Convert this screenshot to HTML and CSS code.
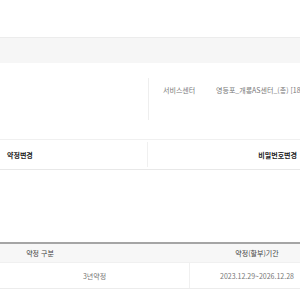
FILE: index.html
```html
<!DOCTYPE html>
<html lang="ko">
<head>
    <meta charset="UTF-8">
    <title>가입정보</title>
    <link rel="stylesheet" href="styles.css">
</head>
<body>
    <div class="top"></div>
    <div class="band"></div>

    <div class="info">
        <div class="info-left"></div>
        <div class="info-right">
            <span class="info-label">서비스센터</span>
            <span class="info-value">영등포_개롱AS센터_(총) [18</span>
        </div>
    </div>

    <div class="actions">
        <div class="action action-left">약정변경</div>
        <div class="action action-right">비밀번호변경</div>
    </div>

    <div class="contract">
        <div class="contract-head">
            <div class="head-cell">약정 구분</div>
            <div class="head-cell"></div>
            <div class="head-cell">약정(할부)기간</div>
        </div>
        <div class="contract-row">
            <div class="row-cell row-type">3년약정</div>
            <div class="row-cell">2023.12.29~2026.12.28</div>
        </div>
    </div>
</body>
</html>
```

FILE: styles.css
```css
body {
    margin: 0;
    background: #fff;
    font-family: "Noto Sans CJK KR", "Noto Sans", sans-serif;
    font-size: 7px;
    color: #666;
    width: 300px;
    overflow: hidden;
}

.top {
    height: 37px;
}

.band {
    height: 25px;
    background-color: #f6f6f6;
    border-top: 1px solid #ececec;
}

.info {
    display: flex;
    height: 76px;
}

.info-left {
    width: 148px;
    flex-shrink: 0;
}

.info-right {
    margin-top: 15px;
    height: 35px;
    flex: 1;
    min-width: 0;
    overflow: hidden;
    border-left: 1px solid #eeeeee;
    display: flex;
    align-items: flex-start;
    padding-top: 7px;
    white-space: nowrap;
}

.info-label {
    margin-left: 14px;
    width: 53px;
    flex-shrink: 0;
    color: #777;
}

.info-value {
    color: #777;
}

.actions {
    display: flex;
    height: 29px;
    border-top: 1px solid #f0f0f0;
    border-bottom: 1px solid #e8e8e8;
}

.action {
    display: flex;
    align-items: center;
    font-weight: 700;
    color: #222;
}

.action-left {
    width: 140px;
    flex-shrink: 0;
    padding-left: 7px;
    border-right: 1px solid #f0f0f0;
    margin: 2px 0;
}

.action-right {
    flex: 1;
    justify-content: flex-end;
    padding-right: 3px;
}

.contract {
    width: 324px;
    margin-top: 72px;
    border-top: 2px solid #a5a5a5;
}

.contract-head {
    display: grid;
    grid-template-columns: 80px 110px 134px;
    height: 18px;
    background-color: #f7f7f7;
    border-bottom: 1px solid #f0f0f0;
}

.head-cell {
    display: flex;
    align-items: center;
    justify-content: center;
    color: #444;
}

.contract-row {
    display: grid;
    grid-template-columns: 190px 134px;
    height: 25px;
    border-bottom: 1px solid #ececec;
}

.row-cell {
    display: flex;
    align-items: center;
    justify-content: center;
    color: #777;
}

.row-type {
    border-right: 1px solid #f0f0f0;
}
```
